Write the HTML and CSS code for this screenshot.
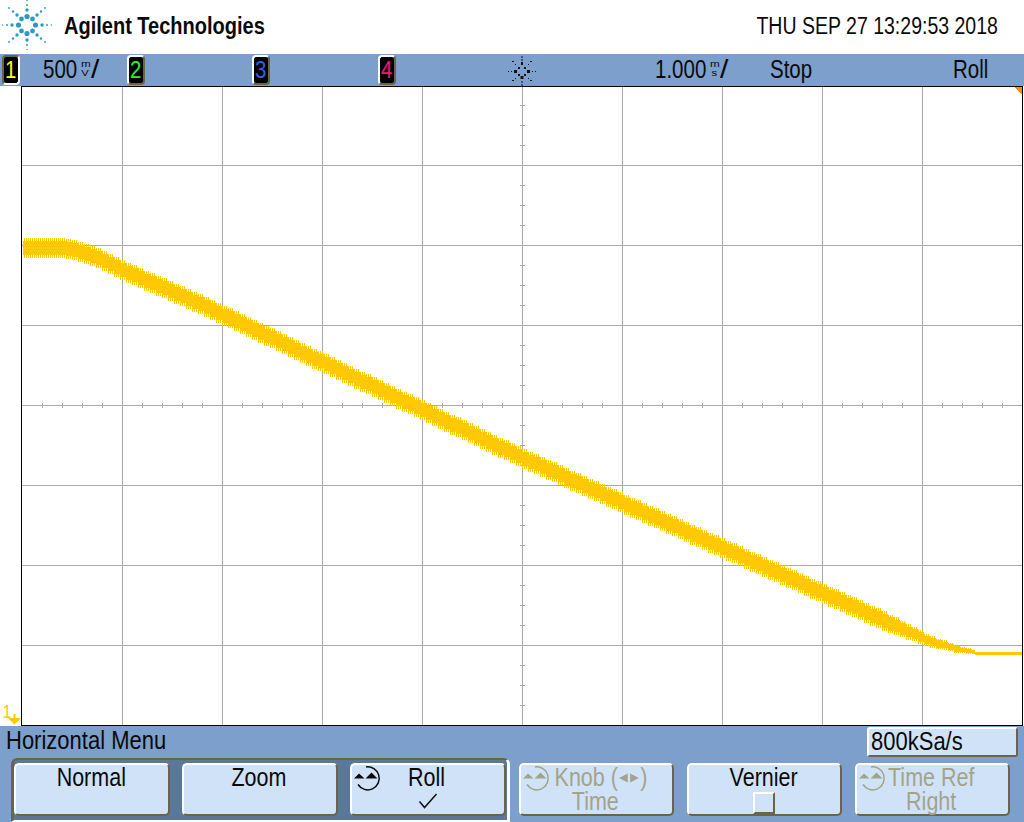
FILE: index.html
```html
<!DOCTYPE html>
<html lang="en">
<head>
<meta charset="utf-8">
<title>Agilent Technologies</title>
<link rel="stylesheet" href="styles.css">
</head>
<body>
<div class="scope">
  <header class="brand">
    <div class="brand-left">
      <svg id="logo" class="logo" width="54" height="50" viewBox="0 0 54 50" fill="#2b9cc0"></svg>
      <span class="brand-name">Agilent Technologies</span>
    </div>
    <span class="clock">THU SEP 27 13:29:53 2018</span>
  </header>

  <div class="status">
    <div class="chan c1"><span class="chan-num">1</span></div>
    <div class="readout r-500"><span class="txt">500</span></div>
    <div class="unit"><span class="u-top">m</span><span class="u-bot">V</span></div>
    <div class="readout r-slash"><span class="txt">/</span></div>
    <div class="chan c2"><span class="chan-num">2</span></div>
    <div class="chan c3"><span class="chan-num">3</span></div>
    <div class="chan c4"><span class="chan-num">4</span></div>
    <svg class="trig" width="30" height="30" viewBox="0 0 30 30">
      <g fill="#111">
        <rect x="14.500" y="0" width="1" height="2"/><rect x="14.500" y="3" width="1" height="2"/><rect x="14" y="6" width="2" height="3"/>
        <rect x="14.500" y="28" width="1" height="2"/><rect x="14.500" y="25" width="1" height="2"/><rect x="13.500" y="20" width="3" height="3"/>
        <rect x="1" y="15" width="1" height="1"/><rect x="4" y="15" width="1" height="1"/><rect x="7" y="14" width="3" height="3"/>
        <rect x="28" y="15" width="1" height="1"/><rect x="25" y="15" width="1" height="1"/><rect x="20" y="14" width="3" height="3"/>
        <rect x="11" y="11" width="2" height="2"/><rect x="17" y="11" width="2" height="2"/><rect x="11" y="18" width="2" height="2"/><rect x="17" y="18" width="2" height="2"/>
        <rect x="5" y="5" width="2" height="1"/><rect x="8" y="8" width="1" height="1"/><rect x="23" y="5" width="2" height="1"/><rect x="21" y="8" width="1" height="1"/>
        <rect x="5" y="24" width="2" height="1"/><rect x="8" y="22" width="1" height="1"/><rect x="23" y="24" width="2" height="1"/><rect x="21" y="22" width="1" height="1"/>
      </g>
    </svg>
    <div class="readout r-time"><span class="txt">1.000</span></div>
    <div class="unit unit-s"><span class="u-top">m</span><span class="u-bot">s</span></div>
    <div class="readout r-slash"><span class="txt">/</span></div>
    <div class="readout r-stop"><span class="txt">Stop</span></div>
    <div class="readout r-roll"><span class="txt">Roll</span></div>
  </div>

  <main class="plot">
    <svg class="graticule" width="1003" height="640" viewBox="21 86 1003 640" shape-rendering="crispEdges">
      <path id="grid" fill="none" stroke="#aaaaaa" stroke-width="1"/>
      <path id="wave" fill="#ffc800"/>
      <path d="M21.500 86.500H1022.500V725.500H21.500Z" fill="none" stroke="#000" stroke-width="1"/>
      <path d="M1015 87h7v8z" fill="#f58a1f"/>
    </svg>
    <div class="gnd"><span class="gnd-num">1</span><svg width="13" height="11" viewBox="0 0 13 11"><path d="M5.500 0h2v4H13L6.500 10.500 0 4h5.500z" fill="#ffc800"/></svg></div>
  </main>

  <div class="softkeys">
    <div class="softkeys-head">
      <span class="menu-title">Horizontal Menu</span>
      <div class="rate"><span class="rate-txt">800kSa/s</span></div>
    </div>
    <div class="keys">
      <div class="key-group">
        <div class="key"><span class="line">Normal</span></div>
        <div class="key"><span class="line">Zoom</span></div>
        <div class="key">
          <svg class="knob" width="30" height="28" viewBox="0 0 30 28"><path d="M14 2A11.500 11.500 0 1 1 6 19.500" fill="none" stroke="currentColor" stroke-width="1.500"/><path d="M2 13.500l5-5 5.500 5zM13.500 13.500l6-6 6 6z" fill="currentColor"/></svg>
          <span class="line">Roll</span>
          <svg class="check" width="20" height="16" viewBox="0 0 20 16"><path d="M1.500 8.500l5 6L18.500 1" fill="none" stroke="#111" stroke-width="1.500"/></svg>
        </div>
      </div>
      <div class="plain-keys">
        <div class="key dim">
          <svg class="knob" width="30" height="28" viewBox="0 0 30 28"><path d="M14 2A11.500 11.500 0 1 1 6 19.500" fill="none" stroke="currentColor" stroke-width="1.500"/><path d="M2 13.500l5-5 5.500 5zM13.500 13.500l6-6 6 6z" fill="currentColor"/></svg>
          <span class="line knob-title">Knob (<svg class="arrows" width="24" height="10" viewBox="0 0 26 10"><path d="M0 5l11-5v10zM14 0l11 5-11 5z" fill="currentColor"/></svg>)</span>
          <span class="line">Time</span>
        </div>
        <div class="key">
          <span class="line">Vernier</span>
          <span class="box"></span>
        </div>
        <div class="key dim">
          <svg class="knob" width="30" height="28" viewBox="0 0 30 28"><path d="M14 2A11.500 11.500 0 1 1 6 19.500" fill="none" stroke="currentColor" stroke-width="1.500"/><path d="M2 13.500l5-5 5.500 5zM13.500 13.500l6-6 6 6z" fill="currentColor"/></svg>
          <span class="line">Time Ref</span>
          <span class="line">Right</span>
        </div>
      </div>
    </div>
  </div>
</div>
<script src="wave.js"></script>
</body>
</html>
```
FILE: styles.css
```css
* { box-sizing: border-box; }
html, body { margin: 0; padding: 0; background: #fff; }
body { width: 1024px; height: 822px; overflow: hidden; font-family: "Liberation Sans", Arial, sans-serif; color: #0a0a0a; }
.scope { display: flex; flex-direction: column; width: 1024px; height: 822px; }

.brand { height: 54px; display: flex; justify-content: space-between; align-items: flex-start; }
.brand-left { display: flex; align-items: flex-start; }
.logo { display: block; flex: none; }
.brand-name { margin: 13px 0 0 10px; font-size: 23px; line-height: 26px; font-weight: 700; white-space: nowrap; display: inline-block; transform: scaleX(.87); transform-origin: left center; }
.clock { margin: 13px 26px 0 0; font-size: 23.500px; line-height: 26px; white-space: nowrap; display: inline-block; transform: scaleX(.83); transform-origin: right center; }

.status { height: 32px; background: #7c9fcc; display: flex; align-items: center; font-size: 25px; }
.chan { width: 18px; height: 30px; background: #000; border-radius: 4px; border: 2px solid; border-color: #fff #6b6548 #6b6548 #fff; display: flex; align-items: center; justify-content: center; flex: none; }
.chan-num { font-size: 24px; line-height: 26px; display: inline-block; transform: scaleX(.85); }
.c1 { margin-left: 2px; border-color: #6b6548 #fff #fff #6b6548; }
.c1 .chan-num { color: #ffff1e; }
.c2 { margin-left: 26px; }
.c2 .chan-num { color: #2ef02e; }
.c3 { margin-left: 107px; }
.c3 .chan-num { color: #2e63e6; }
.c4 { margin-left: 108px; }
.c4 .chan-num { color: #f01870; }

.readout { flex: none; height: 28px; line-height: 26px; white-space: nowrap; }
.txt { display: inline-block; transform: scaleX(.82); transform-origin: left center; }
.r-500 { margin-left: 23px; width: 34px; }
.r-slash { width: 10px; }
.r-slash .txt { transform: scaleX(1.200); }
.r-time { margin-left: 118px; width: 52px; }
.r-stop { margin-left: 40px; width: 44px; }
.r-roll { margin-left: auto; margin-right: 37px; width: 34px; }
.unit { flex: none; width: 11px; margin-left: 3px; display: flex; flex-direction: column; align-items: center; font-size: 9px; line-height: 9px; height: 18px; margin-top: -2px; }
.unit-s { margin-left: 2px; }
.u-top, .u-bot { display: block; height: 9px; }
.u-top { transform: scaleX(1.300); }
.u-bot { transform: scaleX(1.250); }
.trig { margin: 1px 0 0 111px; flex: none; }

.plot { height: 640px; position: relative; background: #fff; }
.graticule { display: block; margin-left: 21px; overflow: visible; }
.gnd { position: absolute; left: 0; top: 617px; width: 21px; height: 22px; }
.gnd-num { position: absolute; left: 2px; top: 0; font-size: 18px; line-height: 18px; color: #ffc800; transform: scaleX(.85); }
.gnd svg { position: absolute; left: 8px; top: 11px; display: block; }

.softkeys { flex: 1; background: #7c9fcc; display: flex; flex-direction: column; min-height: 0; }
.softkeys-head { height: 32px; flex: none; display: flex; justify-content: space-between; align-items: flex-start; }
.menu-title { margin: 2px 0 0 6px; font-size: 25px; line-height: 24px; white-space: nowrap; display: inline-block; transform: scaleX(.88); transform-origin: left center; }
.rate { margin: 1px 6px 0 0; width: 151px; height: 30px; padding-left: 2px; background: #d0e2f8; border-radius: 3px; border: 2px solid; border-color: #fff #6b6548 #6b6548 #fff; font-size: 25px; line-height: 24px; white-space: nowrap; }
.rate-txt { display: inline-block; transform: scaleX(.88); transform-origin: left center; }

.keys { display: flex; align-items: flex-start; padding-left: 11px; }
.key-group { display: flex; gap: 12px; width: 499px; height: 64px; padding: 3px 1px 0 0; background: #5a7899; border: 2px solid; border-left-width: 3px; border-right-width: 3px; border-color: #6b6548 #fff #fff #6b6548; border-radius: 6px 6px 0 0; flex: none; }
.plain-keys { display: flex; gap: 13px; margin: 5px 0 0 9px; }
.key { width: 155px; height: 53px; background: #d0e2f8; border-radius: 5px; border: 2px solid; border-color: #fff #6b6548 #6b6548 #fff; display: flex; flex-direction: column; align-items: center; position: relative; font-size: 25px; line-height: 24px; flex: none; }
.key-group .key { width: 156px; }
.line { display: block; height: 24px; margin-right: 2px; white-space: nowrap; transform: scaleX(.86); }
.dim { color: #a3a38b; }
.knob { position: absolute; left: 0; top: 0; display: block; }
.check { margin-top: 4px; display: block; }
.knob-title { margin: 0 0 0 9px; display: inline-flex; align-items: center; gap: 1px; }
.arrows { display: block; margin-top: 2px; }
.box { display: block; width: 22px; height: 22px; background: #d0e2f8; border: 2px solid; border-color: #fff #6b6548 #6b6548 #fff; margin: 3px 2px 0 0; }
```
FILE: wave.js
```js
(function () {
  var ns = 'http://www.w3.org/2000/svg';
  var logo = document.getElementById('logo');
  function dot(x, y, r) {
    var c = document.createElementNS(ns, 'circle');
    c.setAttribute('cx', x);
    c.setAttribute('cy', y);
    c.setAttribute('r', r);
    logo.appendChild(c);
  }
  var sx = [[1, 0], [-1, 0], [0, 1], [0, -1]];
  var orth = [[24.5, 0.8], [20, 1], [15, 1.7], [8.5, 2.6]];
  var diag = [[18, 17, 0.9], [14, 13.5, 1.2], [10, 10, 1.7], [5.5, 6, 2.4]];
  sx.forEach(function (v) {
    orth.forEach(function (o) { dot(27 + v[0] * o[0], 25 + v[1] * o[0], o[1]); });
  });
  [[1, 1], [1, -1], [-1, 1], [-1, -1]].forEach(function (v) {
    diag.forEach(function (o) { dot(27 + v[0] * o[0], 25 + v[1] * o[1], o[2]); });
  });

  var grid = '';
  var x, y;
  for (x = 122; x <= 922; x += 100) grid += 'M' + (x + 0.5) + ' 86V725';
  for (y = 165; y <= 645; y += 80) grid += 'M21 ' + (y + 0.5) + 'H1022';
  for (x = 42; x <= 1022; x += 20) if ((x - 22) % 100 !== 0) grid += 'M' + (x + 0.5) + ' 403V408';
  for (y = 105; y <= 725; y += 20) if ((y - 5) % 80 !== 0) grid += 'M520 ' + (y + 0.5) + 'H525';
  document.getElementById('grid').setAttribute('d', grid);

  var pts = [[23, 248], [60, 248], [80, 252], [100, 260], [122, 271], [200, 305], [522, 459], [880, 620], [925, 640], [950, 648], [975, 653]];
  function centre(px) {
    for (var i = 1; i < pts.length; i++) {
      if (px <= pts[i][0]) {
        var a = pts[i - 1], b = pts[i];
        return a[1] + (b[1] - a[1]) * (px - a[0]) / (b[0] - a[0]);
      }
    }
    return 653;
  }
  function scale(px) {
    if (px < 880) return 1;
    if (px >= 975) return 0;
    return (975 - px) / 95;
  }
  var d = '';
  for (x = 23; x < 1022; x++) {
    if (x >= 975) { d += 'M' + x + ' 652h1v3h-1z'; continue; }
    var q = x < 60 ? x : x - ((x - 60) % 6);
    var c = Math.round(centre(q));
    var s = scale(q);
    var solid = 1.5 + 5.5 * s;
    var tooth = 2 + 8 * s;
    var h = (x % 2 === 0) ? tooth : solid;
    d += 'M' + x + ' ' + Math.round(c - h) + 'h1V' + Math.round(c + h) + 'h-1z';
  }
  document.getElementById('wave').setAttribute('d', d);
})();
```
